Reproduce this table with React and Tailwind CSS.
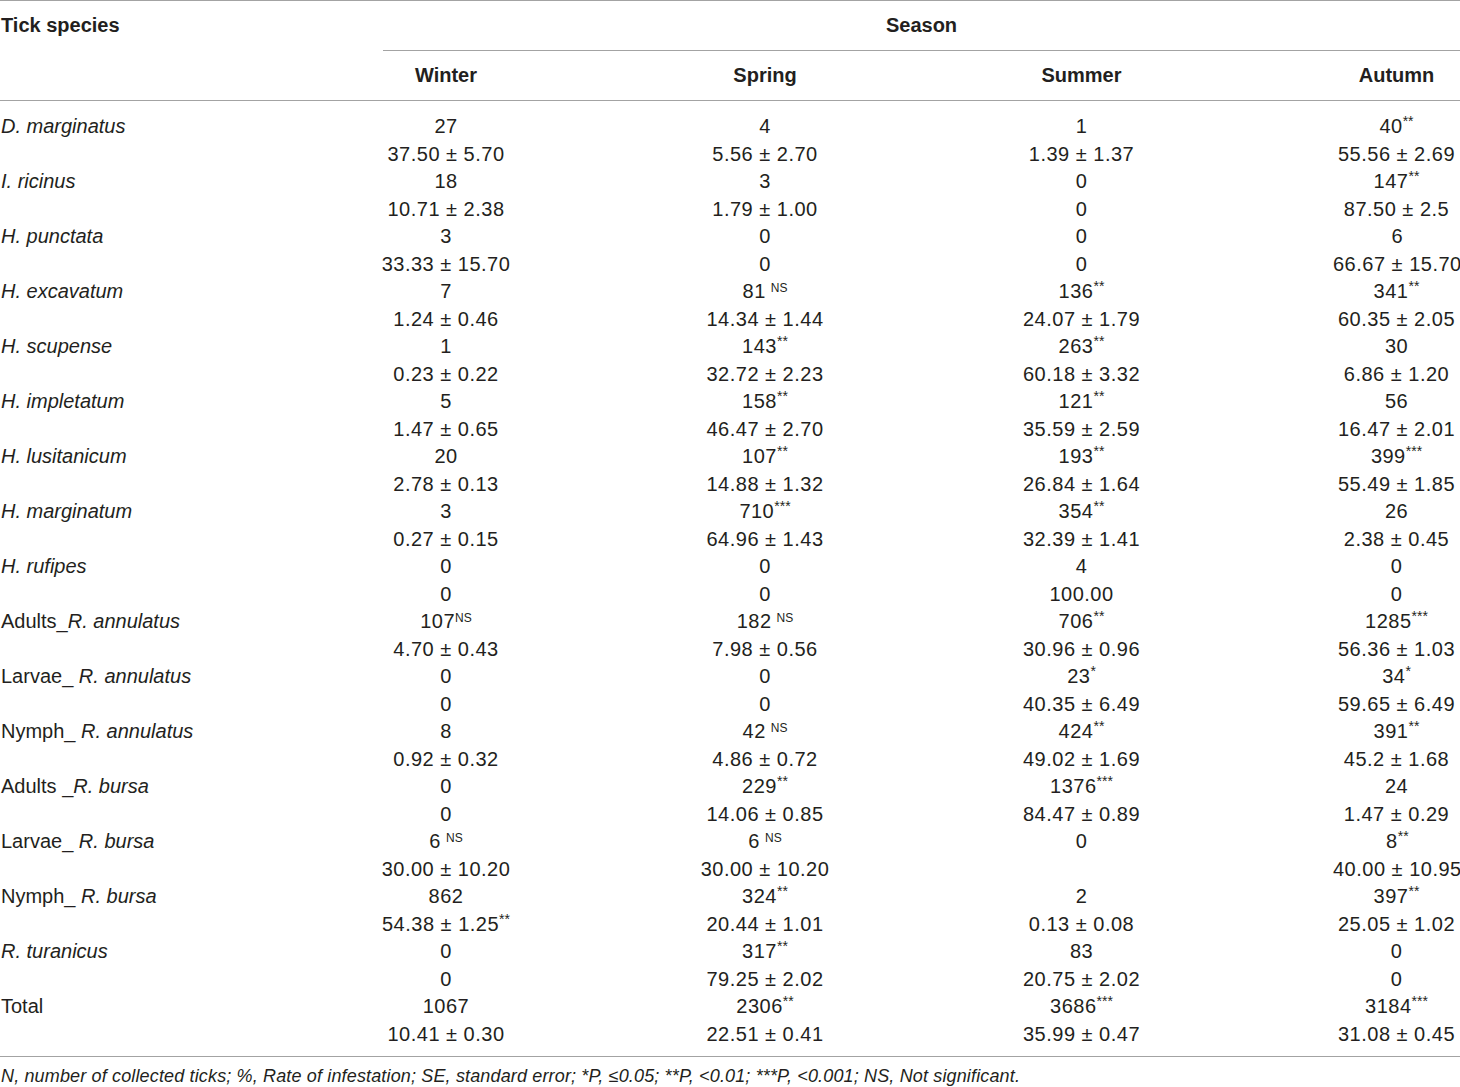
import React from 'react'

// value helper: [main, sup, spaced]
const v = (main, sup, spaced) => ({ main, sup, spaced })

const rows = [
  { name: <i>D. marginatus</i>, cells: [[v('27'), v('37.50 ± 5.70')], [v('4'), v('5.56 ± 2.70')], [v('1'), v('1.39 ± 1.37')], [v('40', '**'), v('55.56 ± 2.69')]] },
  { name: <i>I. ricinus</i>, cells: [[v('18'), v('10.71 ± 2.38')], [v('3'), v('1.79 ± 1.00')], [v('0'), v('0')], [v('147', '**'), v('87.50 ± 2.5')]] },
  { name: <i>H. punctata</i>, cells: [[v('3'), v('33.33 ± 15.70')], [v('0'), v('0')], [v('0'), v('0')], [v('6'), v('66.67 ± 15.70')]] },
  { name: <i>H. excavatum</i>, cells: [[v('7'), v('1.24 ± 0.46')], [v('81', 'NS', true), v('14.34 ± 1.44')], [v('136', '**'), v('24.07 ± 1.79')], [v('341', '**'), v('60.35 ± 2.05')]] },
  { name: <i>H. scupense</i>, cells: [[v('1'), v('0.23 ± 0.22')], [v('143', '**'), v('32.72 ± 2.23')], [v('263', '**'), v('60.18 ± 3.32')], [v('30'), v('6.86 ± 1.20')]] },
  { name: <i>H. impletatum</i>, cells: [[v('5'), v('1.47 ± 0.65')], [v('158', '**'), v('46.47 ± 2.70')], [v('121', '**'), v('35.59 ± 2.59')], [v('56'), v('16.47 ± 2.01')]] },
  { name: <i>H. lusitanicum</i>, cells: [[v('20'), v('2.78 ± 0.13')], [v('107', '**'), v('14.88 ± 1.32')], [v('193', '**'), v('26.84 ± 1.64')], [v('399', '***'), v('55.49 ± 1.85')]] },
  { name: <i>H. marginatum</i>, cells: [[v('3'), v('0.27 ± 0.15')], [v('710', '***'), v('64.96 ± 1.43')], [v('354', '**'), v('32.39 ± 1.41')], [v('26'), v('2.38 ± 0.45')]] },
  { name: <i>H. rufipes</i>, cells: [[v('0'), v('0')], [v('0'), v('0')], [v('4'), v('100.00')], [v('0'), v('0')]] },
  { name: <>Adults_<i>R. annulatus</i></>, cells: [[v('107', 'NS'), v('4.70 ± 0.43')], [v('182', 'NS', true), v('7.98 ± 0.56')], [v('706', '**'), v('30.96 ± 0.96')], [v('1285', '***'), v('56.36 ± 1.03')]] },
  { name: <>Larvae_ <i>R. annulatus</i></>, cells: [[v('0'), v('0')], [v('0'), v('0')], [v('23', '*'), v('40.35 ± 6.49')], [v('34', '*'), v('59.65 ± 6.49')]] },
  { name: <>Nymph_ <i>R. annulatus</i></>, cells: [[v('8'), v('0.92 ± 0.32')], [v('42', 'NS', true), v('4.86 ± 0.72')], [v('424', '**'), v('49.02 ± 1.69')], [v('391', '**'), v('45.2 ± 1.68')]] },
  { name: <>Adults _<i>R. bursa</i></>, cells: [[v('0'), v('0')], [v('229', '**'), v('14.06 ± 0.85')], [v('1376', '***'), v('84.47 ± 0.89')], [v('24'), v('1.47 ± 0.29')]] },
  { name: <>Larvae_ <i>R. bursa</i></>, cells: [[v('6', 'NS', true), v('30.00 ± 10.20')], [v('6', 'NS', true), v('30.00 ± 10.20')], [v('0'), v('')], [v('8', '**'), v('40.00 ± 10.95')]] },
  { name: <>Nymph_ <i>R. bursa</i></>, cells: [[v('862'), v('54.38 ± 1.25', '**')], [v('324', '**'), v('20.44 ± 1.01')], [v('2'), v('0.13 ± 0.08')], [v('397', '**'), v('25.05 ± 1.02')]] },
  { name: <i>R. turanicus</i>, cells: [[v('0'), v('0')], [v('317', '**'), v('79.25 ± 2.02')], [v('83'), v('20.75 ± 2.02')], [v('0'), v('0')]] },
  { name: 'Total', cells: [[v('1067'), v('10.41 ± 0.30')], [v('2306', '**'), v('22.51 ± 0.41')], [v('3686', '***'), v('35.99 ± 0.47')], [v('3184', '***'), v('31.08 ± 0.45')]] },
]

const cols = 'grid grid-cols-[286px_320px_318px_315px_1fr]'

function Val({ d }) {
  const stars = d.sup && d.sup.startsWith('*')
  return (
    <div className="h-[27.5px] whitespace-nowrap tracking-[0.5px]">
      {d.main}
      {d.sup && (
        <sup
          className={`${stars ? 'text-[14px] tracking-[0px]' : 'text-[12px] tracking-[0px]'} ${d.spaced ? 'ml-[5px]' : ''}`}
        >
          {d.sup}
        </sup>
      )}
    </div>
  )
}

export default function App() {
  return (
    <div className="w-[1460px] bg-white text-[#231f20] text-[20px] leading-[27.5px] font-['Liberation_Sans',Arial,sans-serif]">
      <div className="border-t border-[#a3a3a3]">
        <div className="flex h-[50px] items-center font-bold">
          <div className="w-[383px] pl-[1px]">Tick species</div>
          <div className="flex-1 h-full flex items-center justify-center border-b border-[#a3a3a3]">
            Season
          </div>
        </div>
        <div className={`${cols} h-[50px] items-center font-bold border-b border-[#a3a3a3]`}>
          <div />
          <div className="text-center">Winter</div>
          <div className="text-center">Spring</div>
          <div className="text-center">Summer</div>
          <div className="text-center pl-[94px]">Autumn</div>
        </div>
      </div>

      <div className="pt-[12px] pb-[8px] border-b border-[#a3a3a3]">
        {rows.map((r, i) => (
          <div key={i} className={cols}>
            <div className="pl-[1px] whitespace-nowrap">{r.name}</div>
            {r.cells.map((c, j) => (
              <div key={j} className={`text-center ${j === 3 ? 'pl-[94px]' : ''}`}>
                <Val d={c[0]} />
                <Val d={c[1]} />
              </div>
            ))}
          </div>
        ))}
      </div>

      <p className="pt-[7px] pl-[1px] text-[18px] tracking-[0.15px] italic leading-[24px]">
        N, number of collected ticks; %, Rate of infestation; SE, standard error; *P, ≤0.05; **P, &lt;0.01; ***P, &lt;0.001; NS, Not significant.
      </p>
    </div>
  )
}
